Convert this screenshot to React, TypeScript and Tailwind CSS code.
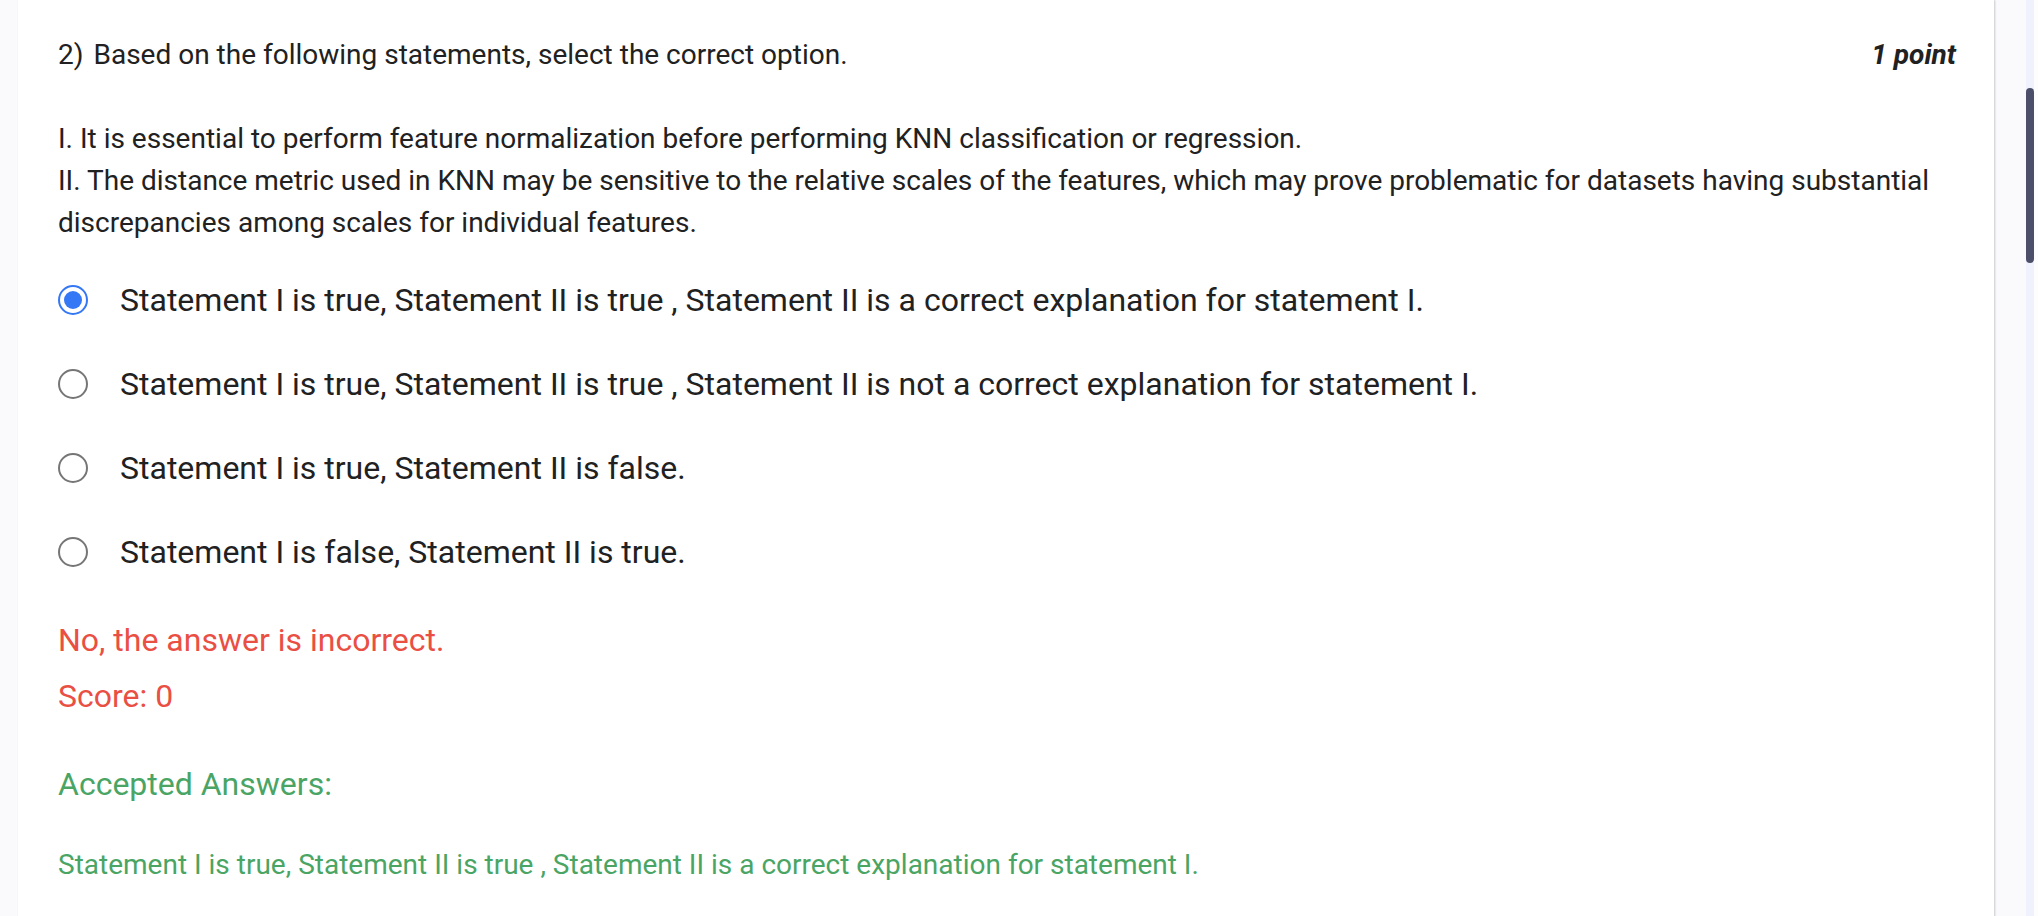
const options = [
  'Statement I is true, Statement II is true , Statement II is a correct explanation for statement I.',
  'Statement I is true, Statement II is true , Statement II is not a correct explanation for statement I.',
  'Statement I is true, Statement II is false.',
  'Statement I is false, Statement II is true.',
];

export default function App() {
  return (
    <div className="relative flex min-h-screen bg-[#fafafc] pl-[18px] pr-11 font-[Roboto,sans-serif] text-[#212121]">
      <main className="w-full bg-white pb-8 pl-10 pr-[38px] pt-[34px] text-[28px] leading-[42px] shadow-[1px_0_2px_rgba(0,0,0,0.2)]">
        <header className="flex justify-between">
          <h1>
            <span className="mr-2.5">2)</span>Based on the following statements, select the correct option.
          </h1>
          <p className="font-bold italic">1 point</p>
        </header>
        <div className="mt-[42px]">
          <p>I. It is essential to perform feature normalization before performing KNN classification or regression.</p>
          <p>
            II. The distance metric used in KNN may be sensitive to the relative scales of the features, which may
            prove problematic for datasets having substantial discrepancies among scales for individual features.
          </p>
        </div>
        <fieldset className="mt-[14px] text-[32px]">
          {options.map((option, i) => (
            <label key={option} className="flex h-[84px] items-center">
              <input
                type="radio"
                name="answer"
                defaultChecked={i === 0}
                className="mr-8 size-[30px] shrink-0 appearance-none rounded-full border-2 border-[#767676] bg-white bg-clip-content p-1 checked:border-[#3478f6] checked:bg-[#3478f6]"
              />
              {option}
            </label>
          ))}
        </fieldset>
        <div className="mt-[18px] text-[32px] leading-[56px] text-[#ea4f44]">
          <p>No, the answer is incorrect.</p>
          <p>Score: 0</p>
        </div>
        <div className="mt-8 text-[#4aa564]">
          <p className="text-[32px] leading-[56px]">Accepted Answers:</p>
          <p className="mt-8">{options[0]}</p>
        </div>
      </main>
      <div className="absolute inset-y-0 right-0 w-3 border-r-4 border-[#fdfdfe] bg-[#eff2fc] pt-[88px]">
        <div className="h-[175px] rounded-full bg-[#4b4f69]" />
      </div>
    </div>
  );
}
